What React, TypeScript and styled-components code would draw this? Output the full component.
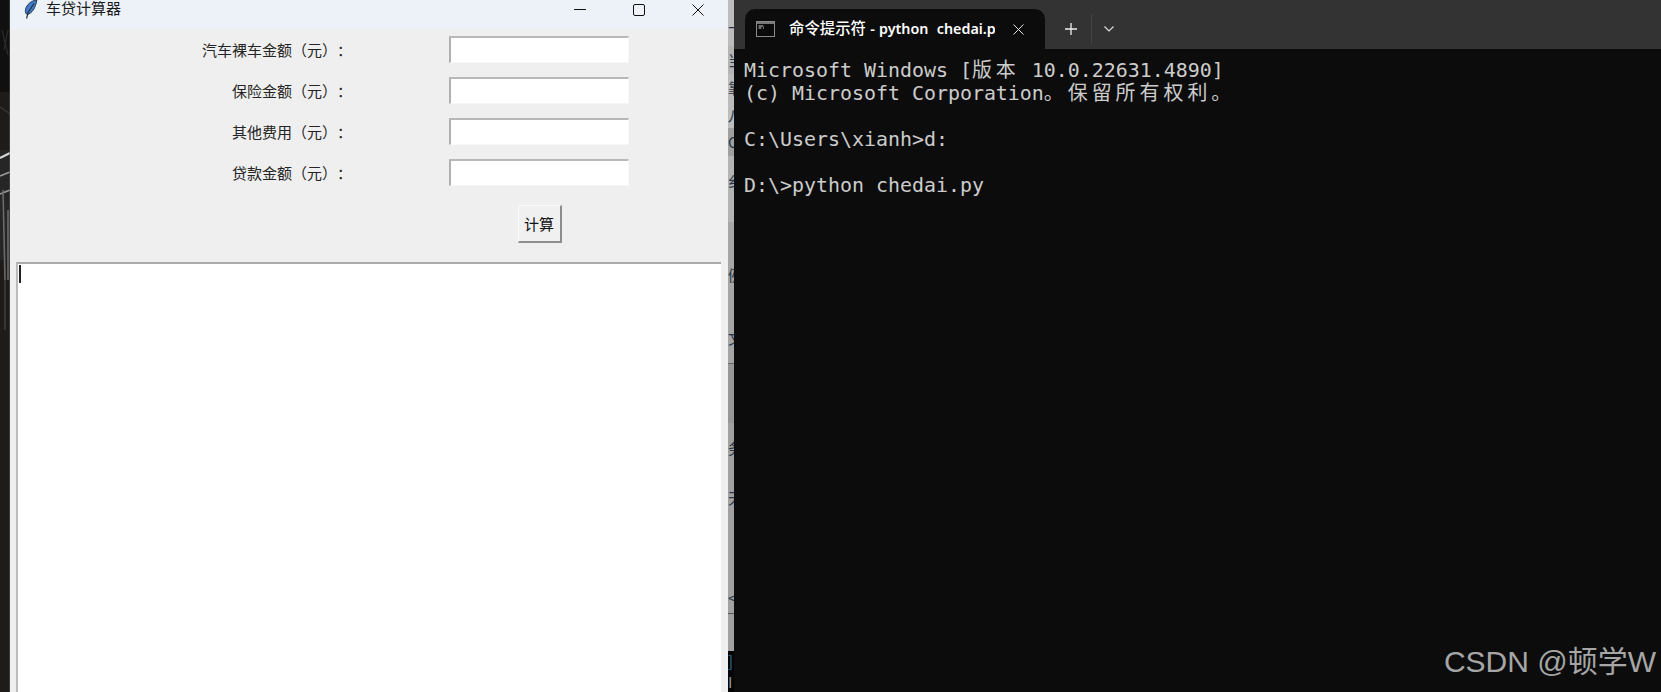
import React from "react";
import styled, { createGlobalStyle } from "styled-components";

const Global = createGlobalStyle`
  html, body { margin: 0; padding: 0; background: #0c0c0c; }
  * { box-sizing: border-box; }
`;

const Page = styled.div`
  display: flex;
  width: 1661px;
  height: 692px;
  overflow: hidden;
`;

const Wallpaper = styled.svg`
  flex: 0 0 10px;
  width: 10px;
  height: 692px;
  display: block;
`;

const TkWindow = styled.div`
  flex: 0 0 718px;
  min-width: 0;
  display: flex;
  flex-direction: column;
  background: #efefef;
  font-family: "Noto Sans CJK SC", "Liberation Sans", sans-serif;
`;

const TitleBar = styled.div`
  flex: 0 0 29px;
  display: flex;
  align-items: flex-start;
  background: #edf2f9;
  padding-left: 14px;
  color: #1a1a1a;
`;

const TitleText = styled.span`
  font-size: 15px;
  line-height: 16px;
  margin-left: 8px;
`;

const WindowControls = styled.div`
  margin-left: auto;
  display: flex;
  padding-right: 24px;
  gap: 47px;
  padding-top: 4px;
`;

const Form = styled.div`
  flex: 0 0 233px;
  display: flex;
  flex-direction: column;
  padding-top: 7px;
`;

const Row = styled.div`
  display: grid;
  grid-template-columns: 342px 376px;
  height: 41px;
  align-items: start;
`;

const Label = styled.label`
  justify-self: end;
  font-size: 15px;
  line-height: 27px;
  color: #242424;
  white-space: nowrap;
  text-spacing-trim: space-all;
`;

const Entry = styled.div`
  margin-left: 97px;
  width: 180px;
  height: 27px;
  background: #fff;
  border-top: 2px solid #b8b8b8;
  border-left: 2px solid #b0b0b0;
  border-right: 1px solid #f7f7f7;
  border-bottom: 1px solid #f7f7f7;
`;

const ButtonRow = styled.div`
  padding-left: 508px;
  padding-top: 5px;
`;

const CalcButton = styled.button`
  display: block;
  width: 44px;
  height: 38px;
  padding: 0 1px 0 0;
  background: #f0f0f0;
  border-style: solid;
  border-width: 1px 2px 2px 1px;
  border-color: #fafafa #8e8e8e #8e8e8e #fafafa;
  font-family: inherit;
  font-size: 15px;
  color: #111;
`;

const OutputBox = styled.div`
  flex: 1;
  margin: 0 7px 0 6px;
  background: #fff;
  border-top: 2px solid #aaa;
  border-left: 2px solid #bbb;
  padding: 1px 0 0 1px;
`;

const Caret = styled.div`
  width: 2px;
  height: 18px;
  background: #222;
`;

const Strip = styled.div`
  flex: 0 0 6px;
  display: flex;
  flex-direction: column;
  overflow: hidden;
  font-family: "Noto Sans CJK SC", sans-serif;
`;

const StripPiece = styled.div<{ $h: number; $bg: string; $fg?: string }>`
  height: ${(p) => p.$h}px;
  flex: 0 0 ${(p) => p.$h}px;
  background: ${(p) => p.$bg};
  color: ${(p) => p.$fg ?? "#26364a"};
  font-size: 15px;
  line-height: ${(p) => p.$h}px;
  white-space: nowrap;
  overflow: hidden;
`;

const Terminal = styled.div`
  flex: 1;
  min-width: 0;
  position: relative;
  display: flex;
  flex-direction: column;
  background: #0c0c0c;
`;

const TabBar = styled.div`
  flex: 0 0 49px;
  display: flex;
  align-items: flex-end;
  background: #333;
  padding-left: 11px;
`;

const Tab = styled.div`
  flex: 0 0 300px;
  height: 40px;
  display: flex;
  align-items: center;
  background: #0c0c0c;
  border-radius: 10px 10px 0 0;
  padding-left: 11px;
`;

const TabTitle = styled.span`
  width: 206px;
  margin-left: 14px;
  overflow: hidden;
  white-space: pre;
  color: #fff;
  font-family: "Noto Sans", "Noto Sans CJK SC", sans-serif;
  font-size: 14.3px;
  font-weight: 600;
  line-height: 40px;
  word-spacing: 0.5px;
`;

const TabCjk = styled.span`
  font-family: "Noto Sans CJK SC", sans-serif;
  font-size: 15.4px;
  font-weight: 500;
  line-height: 1;
`;

const TabClose = styled.span`
  display: flex;
  margin-left: 18px;
`;

const TabActions = styled.div`
  display: flex;
  align-items: center;
  height: 49px;
  padding-top: 9px;
  margin-left: 20px;
`;

const Divider = styled.span`
  width: 1px;
  height: 30px;
  background: #444;
  margin: 0 12px 0 14px;
`;

const Console = styled.pre`
  margin: 0;
  padding: 10px 0 0 10px;
  font-family: "DejaVu Sans Mono", "Noto Sans CJK SC", monospace;
  font-size: 19.93px;
  line-height: 23.1px;
  color: #cccccc;
`;

const Wide = styled.span`
  font-family: "Noto Sans CJK SC", sans-serif;
  letter-spacing: 4px;
  line-height: 1;
`;

const Watermark = styled.div`
  position: absolute;
  right: 5px;
  bottom: 10px;
  font-family: "Liberation Sans", "Noto Sans CJK SC", sans-serif;
  font-size: 30px;
  line-height: 40px;
  color: #a6a6a6;
  white-space: nowrap;
`;

const Feather = () => (
  <svg width="14" height="19" viewBox="0 0 14 19" style={{ flex: "none" }}>
    <path d="M12.8 0 C7.5 0.5 2.5 4.5 1.5 9.5 C1 12 1.8 14 3.2 14.5 C8 13.5 11.5 8 12.8 0 Z" fill="#3f7ccb" stroke="#25364f" strokeWidth="1" />
    <path d="M10 3.5 L4 12.5 L2.6 18.5" fill="none" stroke="#2a3038" strokeWidth="1.2" />
  </svg>
);

const Minimize = () => (
  <svg width="12" height="12" viewBox="0 0 12 12"><path d="M0 5.5H12" stroke="#111" strokeWidth="1" /></svg>
);
const Maximize = () => (
  <svg width="12" height="12" viewBox="0 0 12 12"><rect x="0.5" y="0.5" width="11" height="11" rx="1.5" fill="none" stroke="#111" /></svg>
);
const CloseIcon = () => (
  <svg width="12" height="12" viewBox="0 0 12 12"><path d="M0.5 0.5L11.5 11.5M11.5 0.5L0.5 11.5" stroke="#111" strokeWidth="1" /></svg>
);

const ConsoleIcon = () => (
  <svg width="19" height="16" viewBox="0 0 19 16" style={{ flex: "none" }}>
    <rect x="0.5" y="0.5" width="18" height="15" fill="#0a0a0a" stroke="#8a8a8a" />
    <rect x="1" y="1" width="17" height="2" fill="#777" />
    <path d="M2.5 5h5M2.5 7h3M7 7h1" stroke="#cfcfcf" strokeWidth="1" />
  </svg>
);

const WallpaperArt = () => (
  <Wallpaper viewBox="0 0 10 692" preserveAspectRatio="none">
    <defs>
      <filter id="soft"><feGaussianBlur stdDeviation="0.7" /></filter>
    </defs>
    <rect width="10" height="692" fill="#1e1b1b" />
    <rect width="10" height="92" fill="#101010" />
    <rect y="150" width="10" height="110" fill="#262626" />
    <g filter="url(#soft)">
      <path d="M0 158L10 153" stroke="#d8d8d8" strokeWidth="2" />
      <path d="M0 176L10 172M0 194L10 190" stroke="#9a9a9a" strokeWidth="1.5" />
      <path d="M3 190L5 280M8 210L8 280" stroke="#6a6a6a" strokeWidth="1.6" />
      <path d="M0 107L10 114" stroke="#3a3535" strokeWidth="1.5" />
      <path d="M2 30L8 55M8 30L4 50" stroke="#2c2c2c" strokeWidth="1.2" />
      <path d="M5 280L5 330" stroke="#4a4a4a" strokeWidth="1.2" />
    </g>
    <rect x="9" width="1" height="692" fill="#555" opacity="0.5" />
  </Wallpaper>
);

const rows = ["汽车裸车金额（元）：", "保险金额（元）：", "其他费用（元）：", "贷款金额（元）："];

const pieces: { h: number; bg: string; fg?: string; t?: string }[] = [
  { h: 20, bg: "#bcbcbc" },
  { h: 26, bg: "#bcbcbc", t: "下" },
  { h: 28, bg: "#b4b4b4", t: "当" },
  { h: 28, bg: "#bcbcbc", t: "靠" },
  { h: 26, bg: "#bcbcbc", t: "八" },
  { h: 28, bg: "#a0a0a0", t: "O" },
  { h: 50, bg: "#b4b4b4", t: "纟" },
  { h: 16, bg: "#b4b4b4" },
  { h: 40, bg: "#a6a6a6" },
  { h: 26, bg: "#a6a6a6", t: "例" },
  { h: 30, bg: "#a6a6a6" },
  { h: 40, bg: "#a6a6a6", t: "文" },
  { h: 5, bg: "#a6a6a6" },
  { h: 1, bg: "#666" },
  { h: 59, bg: "#989898" },
  { h: 50, bg: "#a2a2a2", t: "务" },
  { h: 50, bg: "#a2a2a2", t: "天" },
  { h: 60, bg: "#a2a2a2" },
  { h: 30, bg: "#a2a2a2", t: "<" },
  { h: 1, bg: "#555" },
  { h: 37, bg: "#a2a2a2" },
  { h: 20, bg: "#050505", fg: "#2d6f9c", t: "]" },
  { h: 21, bg: "#050505", fg: "#9a9a9a", t: "I" },
];

export default function App() {
  return (
    <>
      <Global />
      <Page>
        <WallpaperArt />
        <TkWindow>
          <TitleBar>
            <Feather />
            <TitleText>车贷计算器</TitleText>
            <WindowControls>
              <Minimize />
              <Maximize />
              <CloseIcon />
            </WindowControls>
          </TitleBar>
          <Form>
            {rows.map((r) => (
              <Row key={r}>
                <Label>{r}</Label>
                <Entry />
              </Row>
            ))}
            <ButtonRow>
              <CalcButton>计算</CalcButton>
            </ButtonRow>
          </Form>
          <OutputBox>
            <Caret />
          </OutputBox>
        </TkWindow>
        <Strip>
          {pieces.map((p, i) => (
            <StripPiece key={i} $h={p.h} $bg={p.bg} $fg={p.fg}>
              {p.t}
            </StripPiece>
          ))}
        </Strip>
        <Terminal>
          <TabBar>
            <Tab>
              <ConsoleIcon />
              <TabTitle><TabCjk>命令提示符</TabCjk>{" - python  chedai.py"}</TabTitle>
              <TabClose>
                <svg width="11" height="11" viewBox="0 0 11 11">
                  <path d="M0.5 0.5L10.5 10.5M10.5 0.5L0.5 10.5" stroke="#e6e6e6" strokeWidth="1" />
                </svg>
              </TabClose>
            </Tab>
            <TabActions>
              <svg width="12" height="12" viewBox="0 0 12 12">
                <path d="M6 0V12M0 6H12" stroke="#f0f0f0" strokeWidth="1.3" />
              </svg>
              <Divider />
              <svg width="10" height="6" viewBox="0 0 10 6">
                <path d="M0.5 0.5L5 5L9.5 0.5" fill="none" stroke="#e0e0e0" strokeWidth="1.1" />
              </svg>
            </TabActions>
          </TabBar>
          <Console>
            {"Microsoft Windows ["}<Wide>版本</Wide>{" 10.0.22631.4890]\n"}
            {"(c) Microsoft Corporation"}<Wide>。保留所有权利。</Wide>{"\n\n"}
            {"C:\\Users\\xianh>d:\n\n"}
            {"D:\\>python chedai.py"}
          </Console>
          <Watermark>CSDN @顿学W</Watermark>
        </Terminal>
      </Page>
    </>
  );
}
